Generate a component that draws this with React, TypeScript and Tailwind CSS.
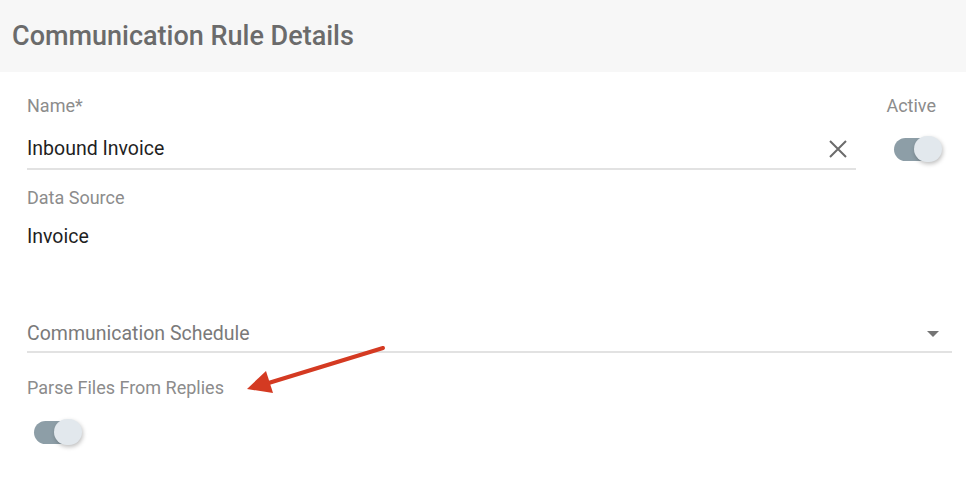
function Toggle() {
  return (
    <div className="relative h-[26px] w-[50px]">
      <div className="absolute left-0 top-[2px] h-[23px] w-[44px] rounded-full bg-[#8d9ea7]" />
      <div className="absolute left-[20px] top-0 h-[26px] w-[28px] rounded-full bg-[#e2e8ed] shadow-[1px_2px_4px_rgba(0,0,0,0.25)]" />
    </div>
  );
}

export default function App() {
  return (
    <div className="w-[966px] h-[488px] bg-white font-['Roboto',sans-serif]">
      <div className="h-[72px] bg-[#f7f7f7] px-3 flex items-center">
        <h1 className="text-[27px] font-medium text-[#6b6b6b]">Communication Rule Details</h1>
      </div>

      <div className="relative px-[27px] pt-[22px]">
        <div className="flex">
          <div className="w-[829px]">
            <div className="text-[18px] text-[#8c8c8c] leading-[24px]">Name*</div>
            <div className="mt-[18px] flex items-center border-b-2 border-[#e2e2e2] pb-[6px]">
              <span className="flex-1 text-[19.5px] text-[#1f1f1f] leading-[26px]">Inbound Invoice</span>
              <svg width="18" height="18" viewBox="0 0 18 18" className="mr-[9px]">
                <path d="M1 1L17 17M17 1L1 17" stroke="#6b6b6b" strokeWidth="2" />
              </svg>
            </div>
          </div>
          <div className="ml-auto flex flex-col items-end mr-[-5px]">
            <div className="text-[18px] text-[#8c8c8c] leading-[24px] mr-[8px]">Active</div>
            <div className="mt-[18px]">
              <Toggle />
            </div>
          </div>
        </div>

        <div className="mt-[16px] text-[18px] text-[#8c8c8c] leading-[24px]">Data Source</div>
        <div className="mt-[14px] text-[19.5px] text-[#1f1f1f] leading-[26px]">Invoice</div>

        <div className="mt-[71px] flex items-center border-b-2 border-[#e2e2e2] pb-[4px] w-[925px]">
          <span className="flex-1 text-[19.5px] text-[#7a7a7a] leading-[26px]">Communication Schedule</span>
          <svg width="14" height="8" viewBox="0 0 14 8" className="mr-[12px]">
            <path d="M1 1h12L7 7z" fill="#757575" />
          </svg>
        </div>

        <div className="mt-[23px] text-[18px] text-[#8c8c8c] leading-[24px]">Parse Files From Replies</div>
        <div className="mt-[19px] ml-[7px]">
          <Toggle />
        </div>

        <svg className="absolute left-[240px] top-[262px]" width="150" height="70" viewBox="0 0 150 70">
          <line x1="143" y1="14" x2="22" y2="51" stroke="#d43a22" strokeWidth="4" strokeLinecap="round" />
          <path d="M7 55 L26 37 L33 59 Z" fill="#d43a22" />
        </svg>
      </div>
    </div>
  );
}
